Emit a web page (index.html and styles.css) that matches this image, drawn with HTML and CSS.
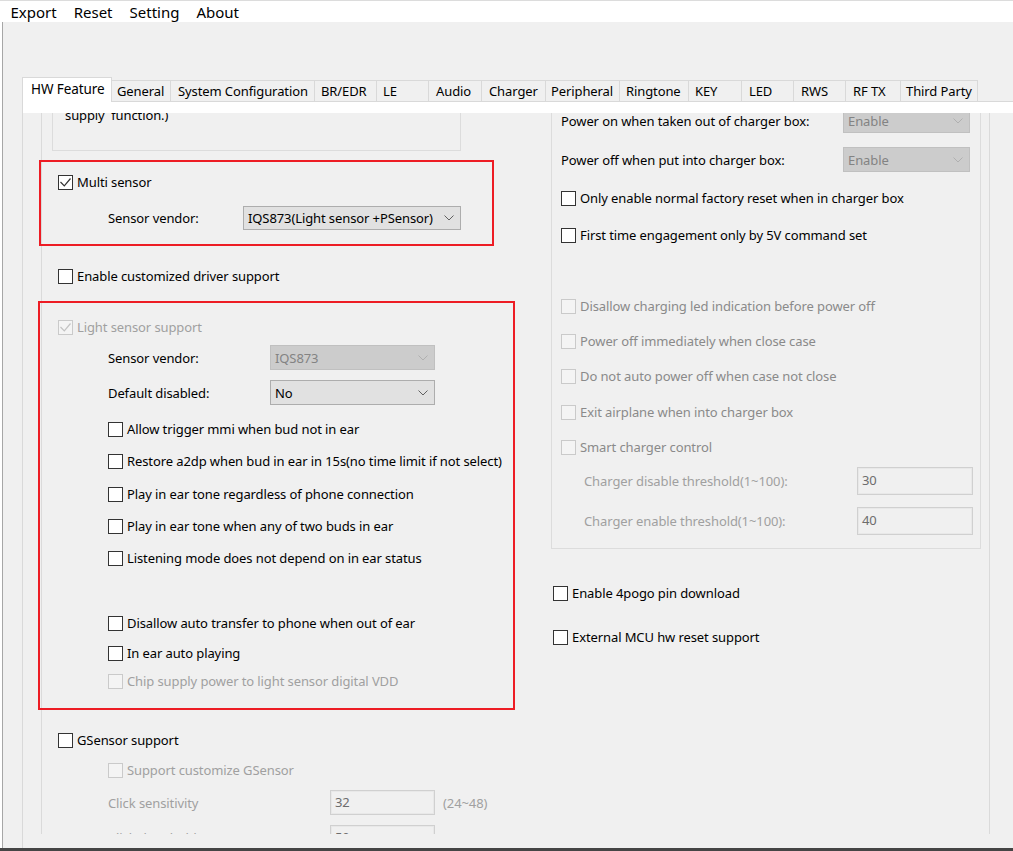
FILE: index.html
```html
<!DOCTYPE html>
<html>
<head>
<meta charset="utf-8">
<link rel="stylesheet" href="styles.css">
</head>
<body>
<div class="menubar"><span>Export</span><span>Reset</span><span>Setting</span><span>About</span></div>
<div class="main">
  <div class="tabs">
    <div class="tab sel">HW Feature</div>
    <div class="tab">General</div>
    <div class="tab">System Configuration</div>
    <div class="tab">BR/EDR</div>
    <div class="tab">LE</div>
    <div class="tab">Audio</div>
    <div class="tab">Charger</div>
    <div class="tab">Peripheral</div>
    <div class="tab">Ringtone</div>
    <div class="tab">KEY</div>
    <div class="tab">LED</div>
    <div class="tab">RWS</div>
    <div class="tab">RF TX</div>
    <div class="tab">Third Party</div>
  </div>
  <div class="page">
    <div class="page-top"></div>
    <div class="scroll">
      <div class="inner">
        <div class="lcol">
          <div class="supply">supply&nbsp;&nbsp;function.)</div>

          <div class="redbox r1">
            <div class="cbrow"><span class="cb"><svg viewBox="0 0 13 13" width="13" height="13"><polyline points="1.5,6 5.3,9.8 11.5,2.5" fill="none" stroke="#333" stroke-width="1.2"/></svg></span>Multi sensor</div>
            <div class="frow h24 mt14 ind50">
              <span class="lbl w135">Sensor vendor:</span>
              <span class="combo w218">IQS873(Light sensor +PSensor)<svg class="chev" viewBox="0 0 10 6" width="10" height="6"><polyline points="0.5,0.5 5,5 9.5,0.5" fill="none" stroke="#606060" stroke-width="1"/></svg></span>
            </div>
          </div>

          <div class="cbrow mt20 ind16"><span class="cb"></span>Enable customized driver support</div>

          <div class="redbox r2">
            <div class="cbrow dis"><span class="cb"><svg viewBox="0 0 13 13" width="13" height="13"><polyline points="1.5,6 5.3,9.8 11.5,2.5" fill="none" stroke="#c2c2c2" stroke-width="1.2"/></svg></span>Light sensor support</div>
            <div class="frow h25 mt8 ind50">
              <span class="lbl w162">Sensor vendor:</span>
              <span class="combo off w165">IQS873<svg class="chev" viewBox="0 0 10 6" width="10" height="6"><polyline points="0.5,0.5 5,5 9.5,0.5" fill="none" stroke="#b0b0b0" stroke-width="1"/></svg></span>
            </div>
            <div class="frow h25 mt10 ind50">
              <span class="lbl w162">Default disabled:</span>
              <span class="combo w165">No<svg class="chev" viewBox="0 0 10 6" width="10" height="6"><polyline points="0.5,0.5 5,5 9.5,0.5" fill="none" stroke="#606060" stroke-width="1"/></svg></span>
            </div>
            <div class="cbrow mt14 ind50"><span class="cb"></span>Allow trigger mmi when bud not in ear</div>
            <div class="cbrow mt12 ind50"><span class="cb"></span>Restore a2dp when bud in ear in 15s(no time limit if not select)</div>
            <div class="cbrow mt13 ind50"><span class="cb"></span>Play in ear tone regardless of phone connection</div>
            <div class="cbrow mt12 ind50"><span class="cb"></span>Play in ear tone when any of two buds in ear</div>
            <div class="cbrow mt12 ind50"><span class="cb"></span>Listening mode does not depend on in ear status</div>
            <div class="cbrow mt45 ind50"><span class="cb"></span>Disallow auto transfer to phone when out of ear</div>
            <div class="cbrow mt10 ind50"><span class="cb"></span>In ear auto playing</div>
            <div class="cbrow mt8 ind50 dis"><span class="cb"></span>Chip supply power to light sensor digital VDD</div>
          </div>

          <div class="cbrow mt20 ind16"><span class="cb"></span>GSensor support</div>
          <div class="cbrow mt10 ind66 dis"><span class="cb"></span>Support customize GSensor</div>
          <div class="frow h25 mt10 ind66 dis">
            <span class="lbl w222">Click sensitivity</span>
            <span class="field w105">32</span>
            <span class="suffix">(24~48)</span>
          </div>
          <div class="frow h25 mt10 ind66 dis">
            <span class="lbl w222">Click threshold(ms)</span>
            <span class="field w105">50</span>
            <span class="suffix">(40~80)</span>
          </div>
        </div>

        <div class="rcol">
          <div class="group">
            <div class="frow h25">
              <span class="lbl w282">Power on when taken out of charger box:</span>
              <span class="combo off w127">Enable<svg class="chev" viewBox="0 0 10 6" width="10" height="6"><polyline points="0.5,0.5 5,5 9.5,0.5" fill="none" stroke="#b0b0b0" stroke-width="1"/></svg></span>
            </div>
            <div class="frow h25 mt14">
              <span class="lbl w282">Power off when put into charger box:</span>
              <span class="combo off w127">Enable<svg class="chev" viewBox="0 0 10 6" width="10" height="6"><polyline points="0.5,0.5 5,5 9.5,0.5" fill="none" stroke="#b0b0b0" stroke-width="1"/></svg></span>
            </div>
            <div class="cbrow mt16"><span class="cb"></span>Only enable normal factory reset when in charger box</div>
            <div class="cbrow mt17"><span class="cb"></span>First time engagement only by 5V command set</div>
            <div class="cbrow mt51 dis2"><span class="cb"></span>Disallow charging led indication before power off</div>
            <div class="cbrow mt15 dis2"><span class="cb"></span>Power off immediately when close case</div>
            <div class="cbrow mt15 dis2"><span class="cb"></span>Do not auto power off when case not close</div>
            <div class="cbrow mt16 dis2"><span class="cb"></span>Exit airplane when into charger box</div>
            <div class="cbrow mt15 dis2"><span class="cb"></span>Smart charger control</div>
            <div class="frow h28 mt10 ind23 dis">
              <span class="lbl w273">Charger disable threshold(1~100):</span>
              <span class="field tall w116">30</span>
            </div>
            <div class="frow h28 mt12 ind23 dis">
              <span class="lbl w273">Charger enable threshold(1~100):</span>
              <span class="field tall w116">40</span>
            </div>
          </div>
          <div class="cbrow mt34 ind2"><span class="cb"></span>Enable 4pogo pin download</div>
          <div class="cbrow mt24 ind2"><span class="cb"></span>External MCU hw reset support</div>
        </div>
      </div>
    </div>
  </div>
</div>
<div class="edge"></div>
</body>
</html>
```

FILE: styles.css
```css
* { box-sizing: border-box; margin: 0; padding: 0; }
html, body { width: 1013px; height: 851px; overflow: hidden; }
body {
  background: #fff;
  font-family: "Noto Sans", "Open Sans", sans-serif;
  font-size: 13px;
  letter-spacing: -0.1px;
  color: #000;
}

/* menu */
.menubar {
  height: 22px;
  border-top: 1px solid #dcdcdc;
  background: #fff;
  display: flex;
  align-items: center;
  padding: 1px 0 0 2px;
  font-size: 15px;
  letter-spacing: 0;
}
.menubar span { padding: 0 8.5px; }

/* window body */
.main {
  margin-left: 2px;
  border-left: 1px solid #a6a6a6;
  background: #f0f0f0;
  height: 826px;
  padding-top: 55px;
  display: flex;
  flex-direction: column;
}
.edge { height: 3px; background: #454545; }

/* tabs */
.tabs {
  margin-left: 19px;
  height: 25px;
  border-bottom: 1px solid #d9d9d9;
  display: flex;
  align-items: flex-end;
}
.tab {
  height: 21px;
  border-top: 1px solid #d9d9d9;
  border-right: 1px solid #d9d9d9;
  padding-left: 6px;
  display: flex;
  align-items: center;
  font-size: 13px;
  white-space: nowrap;
  overflow: hidden;
}
.tab.sel {
  height: 25px;
  margin-bottom: -1px;
  background: #fff;
  border-left: 1px solid #d9d9d9;
  padding-left: 8px;
  padding-bottom: 2px;
  font-size: 13.5px;
}
.tab:nth-child(1) { width: 90px; }
.tab:nth-child(2) { width: 59px; padding-left: 5px; }
.tab:nth-child(3) { width: 144px; padding-left: 7px; }
.tab:nth-child(4) { width: 62px; }
.tab:nth-child(5) { width: 52px; }
.tab:nth-child(6) { width: 53px; padding-left: 7px; }
.tab:nth-child(7) { width: 64px; padding-left: 7px; }
.tab:nth-child(8) { width: 74px; padding-left: 5px; }
.tab:nth-child(9) { width: 69px; }
.tab:nth-child(10) { width: 53px; }
.tab:nth-child(11) { width: 52px; padding-left: 7px; }
.tab:nth-child(12) { width: 52px; padding-left: 7px; }
.tab:nth-child(13) { width: 55px; padding-left: 7px; }
.tab:nth-child(14) { width: 77px; padding-left: 5px; }

/* tab page */
.page {
  flex: 1;
  margin-left: 19px;
  border-left: 1px solid #d9d9d9;
  display: flex;
  flex-direction: column;
}
.page-top { height: 11px; background: #fff; }
.scroll {
  height: 721px;
  overflow: hidden;
  padding-left: 18px;
}
.inner {
  width: 949px;
  height: 721px;
  border-left: 1px solid #dadada;
  border-right: 1px solid #dadada;
  display: grid;
  grid-template-columns: 509px 438px;
  align-items: start;
}
.lcol, .rcol { display: flex; flex-direction: column; align-items: flex-start; }

/* left column blocks */
.supply {
  margin-top: -30px;
  margin-left: 10px;
  width: 409px;
  height: 68px;
  border: 1px solid #dcdcdc;
  padding: 23px 0 0 12px;
  line-height: 16px;
}
.redbox { border: 2px solid #ed1c24; }
.r1 {
  margin-top: 9px;
  margin-left: -3px;
  width: 455px;
  padding: 10px 0 14px 17px;
}
.r2 {
  margin-top: 15px;
  margin-left: -4px;
  width: 477px;
  padding: 14px 0 17px 18px;
}

/* right group */
.group {
  margin-top: -20px;
  width: 430px;
  border: 1px solid #dcdcdc;
  border-top-color: transparent;
  padding: 14px 0 13px 9px;
  display: flex;
  flex-direction: column;
  align-items: flex-start;
}

/* rows */
.cbrow {
  height: 20px;
  display: flex;
  align-items: center;
  white-space: nowrap;
}
.cb {
  width: 15px;
  height: 15px;
  border: 1px solid #333;
  background: #fff;
  margin-right: 4px;
  flex: none;
  display: flex;
}
.dis { color: #a0a0a0; }
.dis2 { color: #8a8a8a; }
.dis .cb, .dis2 .cb { border-color: #cacaca; background: #f4f4f4; }

.frow { display: flex; align-items: center; white-space: nowrap; }
.h24 { height: 24px; }
.h25 { height: 25px; }
.h28 { height: 28px; }
.lbl { flex: none; }
.combo {
  flex: none;
  align-self: stretch;
  position: relative;
  background: #e1e1e1;
  border: 1px solid #adadad;
  padding-left: 4px;
  display: flex;
  align-items: center;
}
.combo.off { background: #cccccc; border-color: #c0c0c0; color: #838383; }
.chev { position: absolute; right: 6px; top: 50%; margin-top: -3px; }
.field {
  flex: none;
  align-self: stretch;
  background: #f0f0f0;
  border: 1px solid #d0d0d0;
  box-shadow: inset 0 0 0 1px #e8e8e8;
  color: #6d6d6d;
  padding: 2px 0 0 4px;
}
.field.tall { padding-top: 3px; }
.suffix { margin-left: 8px; }

/* sizes */
.w105 { width: 105px; }
.w116 { width: 116px; }
.w127 { width: 127px; }
.w135 { width: 135px; }
.w162 { width: 162px; }
.w165 { width: 165px; }
.w218 { width: 218px; }
.w222 { width: 222px; }
.w273 { width: 273px; }
.w282 { width: 282px; }

/* spacing */
.mt8 { margin-top: 8px; }
.mt10 { margin-top: 10px; }
.mt12 { margin-top: 12px; }
.mt13 { margin-top: 13px; }
.mt14 { margin-top: 14px; }
.mt15 { margin-top: 15px; }
.mt16 { margin-top: 16px; }
.mt17 { margin-top: 17px; }
.mt20 { margin-top: 20px; }
.mt24 { margin-top: 24px; }
.mt34 { margin-top: 34px; }
.mt45 { margin-top: 45px; }
.mt51 { margin-top: 51px; }
.ind2 { margin-left: 2px; }
.ind16 { margin-left: 16px; }
.ind23 { margin-left: 23px; }
.ind50 { margin-left: 50px; }
.ind66 { margin-left: 66px; }
```
